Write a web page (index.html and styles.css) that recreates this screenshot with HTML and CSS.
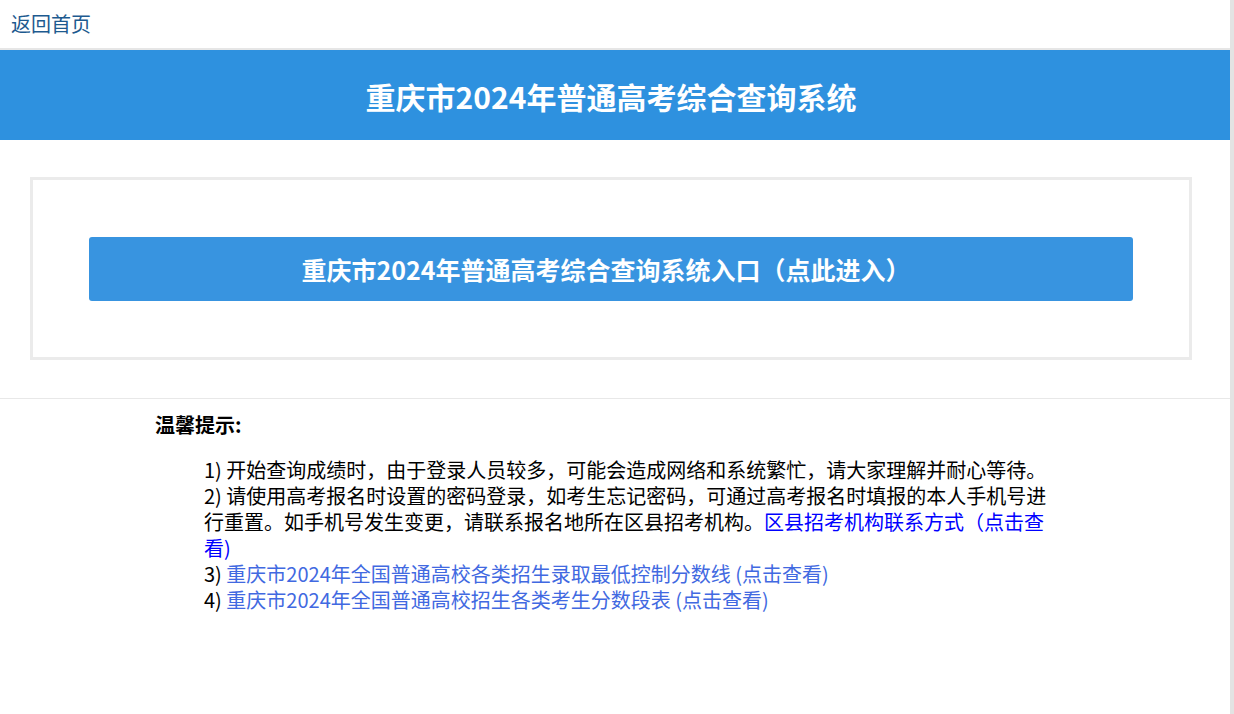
FILE: index.html
```html
<html>
<head>
<meta charset="UTF-8">
<meta name="viewport" content="width=device-width">
<title>重庆市2024年普通高考综合查询系统</title>
<link rel="stylesheet" href="styles.css">
</head>
<body>
<div class="topbar">
	<a class="back" href="#">返回首页</a>
</div>
<div class="banner">
	<h1>重庆市2024年普通高考综合查询系统</h1>
</div>
<div class="entryBox">
	<a class="entryBtn" href="#">重庆市2024年普通高考综合查询系统入口（点此进入）</a>
</div>
<hr class="split"/>
<div class="tips">
	<h3>温馨提示:</h3>
	<div class="tipList">
		<div>1) 开始查询成绩时，由于登录人员较多，可能会造成网络和系统繁忙，请大家理解并耐心等待。</div>
		<div>2) 请使用高考报名时设置的密码登录，如考生忘记密码，可通过高考报名时填报的本人手机号进行重置。如手机号发生变更，请联系报名地所在区县招考机构。<a class="lnkBlue" href="#">区县招考机构联系方式（点击查看)</a></div>
		<div>3) <a class="lnk" href="#">重庆市2024年全国普通高校各类招生录取最低控制分数线 (点击查看)</a></div>
		<div>4) <a class="lnk" href="#">重庆市2024年全国普通高校招生各类考生分数段表 (点击查看)</a></div>
	</div>
</div>
</body>
</html>
```

FILE: styles.css
```css
html, body {
	margin: 0;
	padding: 0;
}
body {
	min-height: 100vh;
	box-sizing: border-box;
	border-right: 4px solid #e3e3e3;
	background-color: #ffffff;
	font-family: "Noto Sans CJK SC", "Noto Sans", sans-serif;
	font-size: 20px;
	line-height: 26px;
	color: #000000;
}
a {
	text-decoration: none;
}
.topbar {
	height: 48px;
	display: flex;
	align-items: center;
	padding-left: 11px;
	border-bottom: 2px solid #e6e6e6;
}
.back {
	color: #1d5a8f;
	font-size: 20px;
}
.banner {
	height: 90px;
	background-color: #2e91df;
	display: flex;
	align-items: center;
	justify-content: center;
}
.banner h1 {
	margin: 2px 8px 0 0;
	color: #ffffff;
	font-size: 30px;
	line-height: 36px;
	font-weight: bold;
}
.entryBox {
	margin: 37px 38px 0 30px;
	border: 3px solid #ebebeb;
	padding: 57px 56px 56px 56px;
}
.entryBtn {
	display: flex;
	align-items: center;
	justify-content: center;
	height: 64px;
	padding-right: 10px;
	box-sizing: border-box;
	border-radius: 3px;
	background-color: #3894e0;
	color: #ffffff;
	font-size: 25px;
	font-weight: bold;
}
hr.split {
	margin: 38px 0 0 0;
	border: 0;
	border-top: 1px solid #e8e8e8;
	height: 0;
}
.tips {
	width: 920px;
	margin: 0 auto;
	padding-top: 13px;
}
.tips h3 {
	margin: 0;
	font-size: 20px;
	font-weight: bold;
}
.tipList {
	margin-top: 19px;
	padding-left: 49px;
	width: 856px;
}
.lnkBlue {
	color: #0000ff;
}
.lnk {
	color: #4169e1;
}
```
